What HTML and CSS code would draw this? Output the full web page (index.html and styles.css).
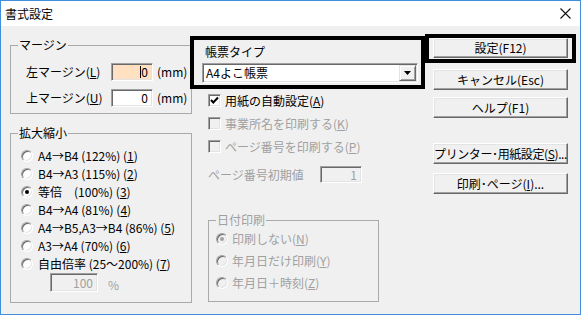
FILE: index.html
```html
<!DOCTYPE html>
<html lang="ja">
<head>
<meta charset="utf-8">
<title>書式設定</title>
<link rel="stylesheet" href="styles.css">
</head>
<body>
<div class="window">
  <div class="titlebar">
    <span class="title">書式設定</span>
    <svg class="close" width="11" height="11" viewBox="0 0 11 11"><path d="M0.5 0.5L10.5 10.5M10.5 0.5L0.5 10.5" stroke="#111" stroke-width="1.1" fill="none"/></svg>
  </div>
  <div class="client">
    <div class="col-left">
      <fieldset class="group group-margin">
        <legend>マージン</legend>
        <div class="margin-rows">
          <div class="mrow">
            <span class="mlabel">左マージン(<u>L</u>)</span>
            <span class="edit edit-num edit-focus"><span class="caret"></span>0</span>
            <span class="unit">(mm)</span>
          </div>
          <div class="mrow">
            <span class="mlabel">上マージン(<u>U</u>)</span>
            <span class="edit edit-num">0</span>
            <span class="unit">(mm)</span>
          </div>
        </div>
      </fieldset>
      <fieldset class="group group-scale">
        <legend>拡大縮小</legend>
        <div class="scale-list">
          <div class="ritem"><span class="radio"></span><span>A4→B4 (122%) (<u>1</u>)</span></div>
          <div class="ritem"><span class="radio"></span><span>B4→A3 (115%) (<u>2</u>)</span></div>
          <div class="ritem"><span class="radio checked"></span><span>等倍　(100%) (<u>3</u>)</span></div>
          <div class="ritem"><span class="radio"></span><span>B4→A4 (81%) (<u>4</u>)</span></div>
          <div class="ritem"><span class="radio"></span><span>A4→B5,A3→B4 (86%) (<u>5</u>)</span></div>
          <div class="ritem"><span class="radio"></span><span>A3→A4 (70%) (<u>6</u>)</span></div>
          <div class="ritem"><span class="radio"></span><span>自由倍率 (25～200%) (<u>7</u>)</span></div>
        </div>
        <div class="custom-row">
          <span class="edit edit-num edit-disabled edit-rate">100</span>
          <span class="pct">%</span>
        </div>
      </fieldset>
    </div>

    <div class="col-mid">
      <div class="highlight form-type">
        <div class="ft-label">帳票タイプ</div>
        <div class="combo">
          <span class="combo-text">A4よこ帳票</span>
          <span class="combo-btn"><svg width="7" height="4" viewBox="0 0 7 4"><polygon points="0,0 7,0 3.5,4" fill="#000"/></svg></span>
        </div>
      </div>
      <div class="checks">
        <div class="citem"><span class="check"><svg width="9" height="9" viewBox="0 0 9 9"><path d="M1 4 L3.3 6.5 L8 1.5" stroke="#000" stroke-width="2" fill="none"/></svg></span><span>用紙の自動設定(<u>A</u>)</span></div>
        <div class="citem disabled"><span class="check check-disabled"></span><span>事業所名を印刷する(<u>K</u>)</span></div>
        <div class="citem disabled"><span class="check check-disabled"></span><span>ページ番号を印刷する(<u>P</u>)</span></div>
      </div>
      <div class="page-start disabled">
        <span class="ps-label">ページ番号初期値</span>
        <span class="edit edit-num edit-disabled edit-page">1</span>
      </div>
      <fieldset class="group group-date disabled">
        <legend>日付印刷</legend>
        <div class="date-list">
          <div class="ritem"><span class="radio radio-disabled checked"></span><span>印刷しない(<u>N</u>)</span></div>
          <div class="ritem"><span class="radio radio-disabled"></span><span>年月日だけ印刷(<u>Y</u>)</span></div>
          <div class="ritem"><span class="radio radio-disabled"></span><span>年月日＋時刻(<u>Z</u>)</span></div>
        </div>
      </fieldset>
    </div>

    <div class="col-right">
      <div class="highlight default-frame"><button class="btn btn-default" type="button">設定(F12)</button></div>
      <button class="btn btn-cancel" type="button">キャンセル(Esc)</button>
      <button class="btn btn-help" type="button">ヘルプ(F1)</button>
      <button class="btn btn-printer" type="button">プリンター･用紙設定(<u>S</u>)...</button>
      <button class="btn btn-page" type="button">印刷･ページ(<u>I</u>)...</button>
    </div>
  </div>
</div>
</body>
</html>
```

FILE: styles.css
```css
* { box-sizing: border-box; }
html, body { margin: 0; padding: 0; }
body {
  width: 581px;
  height: 317px;
  overflow: hidden;
  background: #fff;
  color: #000;
  font-family: "Noto Sans CJK JP", "Noto Sans", sans-serif;
  font-size: 12px;
  line-height: 14px;
}
u { text-decoration: underline; text-underline-offset: 1px; }

.window {
  width: 581px;
  height: 315px;
  border: 1px solid #3f8fdc;
  display: flex;
  flex-direction: column;
}
.titlebar {
  height: 25px;
  flex: 0 0 25px;
  background: #fff;
  display: flex;
  align-items: center;
  justify-content: space-between;
  padding-left: 4px;
}
.title { font-size: 12px; }
.close { margin-right: 9px; }

.client {
  flex: 1;
  background: #f0f0f0;
  display: flex;
  align-items: flex-start;
  padding-left: 9px;
}

/* group boxes */
.group {
  margin: 0;
  padding: 0;
  min-width: 0;
  border: 1px solid #a9a9a9;
}
.group legend {
  margin-left: 7px;
  padding: 0 1px;
  line-height: 14px;
}

/* left column */
.col-left { width: 182px; flex: 0 0 182px; padding-top: 12px; }
.margin-rows { padding: 11px 0 6px 15px; display: flex; flex-direction: column; gap: 8px; }
.mrow { display: flex; align-items: center; height: 18px; }
.mlabel { width: 85px; }
.unit { margin-left: 4px; }

.edit {
  display: inline-flex;
  align-items: center;
  background: #fff;
  border: 1px solid;
  border-color: #a0a0a0 #fff #fff #a0a0a0;
  box-shadow: inset 1px 1px 0 #696969, inset -1px -1px 0 #e3e3e3;
  height: 18px;
  width: 42px;
}
.edit-num { justify-content: flex-end; padding-right: 4px; }
.edit-focus { background: #ffe1c2; }
.caret { display: inline-block; width: 1px; height: 12px; background: #000; }
.edit-disabled { background: #f0f0f0; color: #a0a0a0; }
.edit-rate { width: 48px; height: 19px; }
.edit-page { height: 17px; }

.group-scale { margin-top: 12px; }
.scale-list { padding: 7px 0 0 10px; }
.ritem { display: flex; align-items: center; height: 18px; white-space: nowrap; }
.scale-list .radio { margin-right: 5px; }
.custom-row { display: flex; align-items: flex-end; padding: 0 0 10px 39px; }
.pct { margin-left: 10px; color: #a0a0a0; line-height: 14px; }

.radio {
  position: relative;
  flex: 0 0 12px;
  width: 12px;
  height: 12px;
  border-radius: 50%;
  background: #fff;
  border: 1px solid;
  border-color: #a0a0a0 #fff #fff #a0a0a0;
  box-shadow: inset 1px 1px 0 #696969, inset -1px -1px 0 #e3e3e3;
}
.radio.checked::after {
  content: "";
  position: absolute;
  left: 3px;
  top: 3px;
  width: 4px;
  height: 4px;
  border-radius: 50%;
  background: #000;
}
.radio-disabled { background: #f0f0f0; }
.radio-disabled.checked::after { background: #a0a0a0; }

/* middle column */
.col-mid { width: 235px; flex: 0 0 235px; margin-left: -2px; padding-top: 10px; }
.highlight { border: 4px solid #000; }
.form-type { padding: 5px 2px 2px 8px; }
.ft-label { margin-left: 3px; }
.combo {
  margin-top: 4px;
  width: 216px;
  height: 20px;
  display: flex;
  align-items: center;
  padding: 1px;
  background: #fff;
  border: 1px solid;
  border-color: #a0a0a0 #fff #fff #a0a0a0;
  box-shadow: inset 1px 1px 0 #696969, inset -1px -1px 0 #e3e3e3;
}
.combo-text { flex: 1; padding-left: 2px; }
.combo-btn {
  width: 17px;
  height: 16px;
  display: flex;
  align-items: center;
  justify-content: center;
  background: #f0f0f0;
  border: 1px solid;
  border-color: #e3e3e3 #696969 #696969 #e3e3e3;
  box-shadow: inset 1px 1px 0 #fff, inset -1px -1px 0 #a0a0a0;
}

.citem { display: flex; align-items: center; height: 23px; padding-left: 18px; }
.check {
  flex: 0 0 13px;
  width: 13px;
  height: 13px;
  margin-right: 4px;
  display: flex;
  align-items: center;
  justify-content: center;
  background: #fff;
  border: 1px solid;
  border-color: #a0a0a0 #fff #fff #a0a0a0;
  box-shadow: inset 1px 1px 0 #696969, inset -1px -1px 0 #e3e3e3;
}
.check-disabled { background: #f0f0f0; }
.disabled { color: #a0a0a0; }

.page-start { display: flex; align-items: center; margin-top: 8px; padding-left: 18px; height: 17px; }
.ps-label { width: 112px; }

.group-date { margin: 30px 0 0 18px; width: 171px; }
.date-list { padding: 1px 0 7px 7px; }
.date-list .ritem { height: 22px; }
.date-list .radio { margin-right: 4px; }

/* right column */
.col-right { width: 151px; flex: 0 0 151px; padding-top: 8px; display: flex; flex-direction: column; }
.default-frame { padding: 0 4px 1px; }
.btn {
  display: flex;
  align-items: center;
  justify-content: center;
  width: 135px;
  height: 21px;
  padding: 0;
  margin: 0;
  font: inherit;
  color: #000;
  background: #f0f0f0;
  border: 1px solid;
  border-color: #fff #696969 #696969 #fff;
  box-shadow: inset -1px -1px 0 #a0a0a0, inset 1px 1px 0 #e3e3e3;
  white-space: nowrap;
}
.btn-default { height: 20px; }
.col-right > .btn { margin-left: 8px; }
.btn-cancel { margin-top: 6px; }
.btn-help { margin-top: 7px; }
.btn-printer { margin-top: 25px; letter-spacing: -0.4px; }
.btn-page { margin-top: 9px; }
```
